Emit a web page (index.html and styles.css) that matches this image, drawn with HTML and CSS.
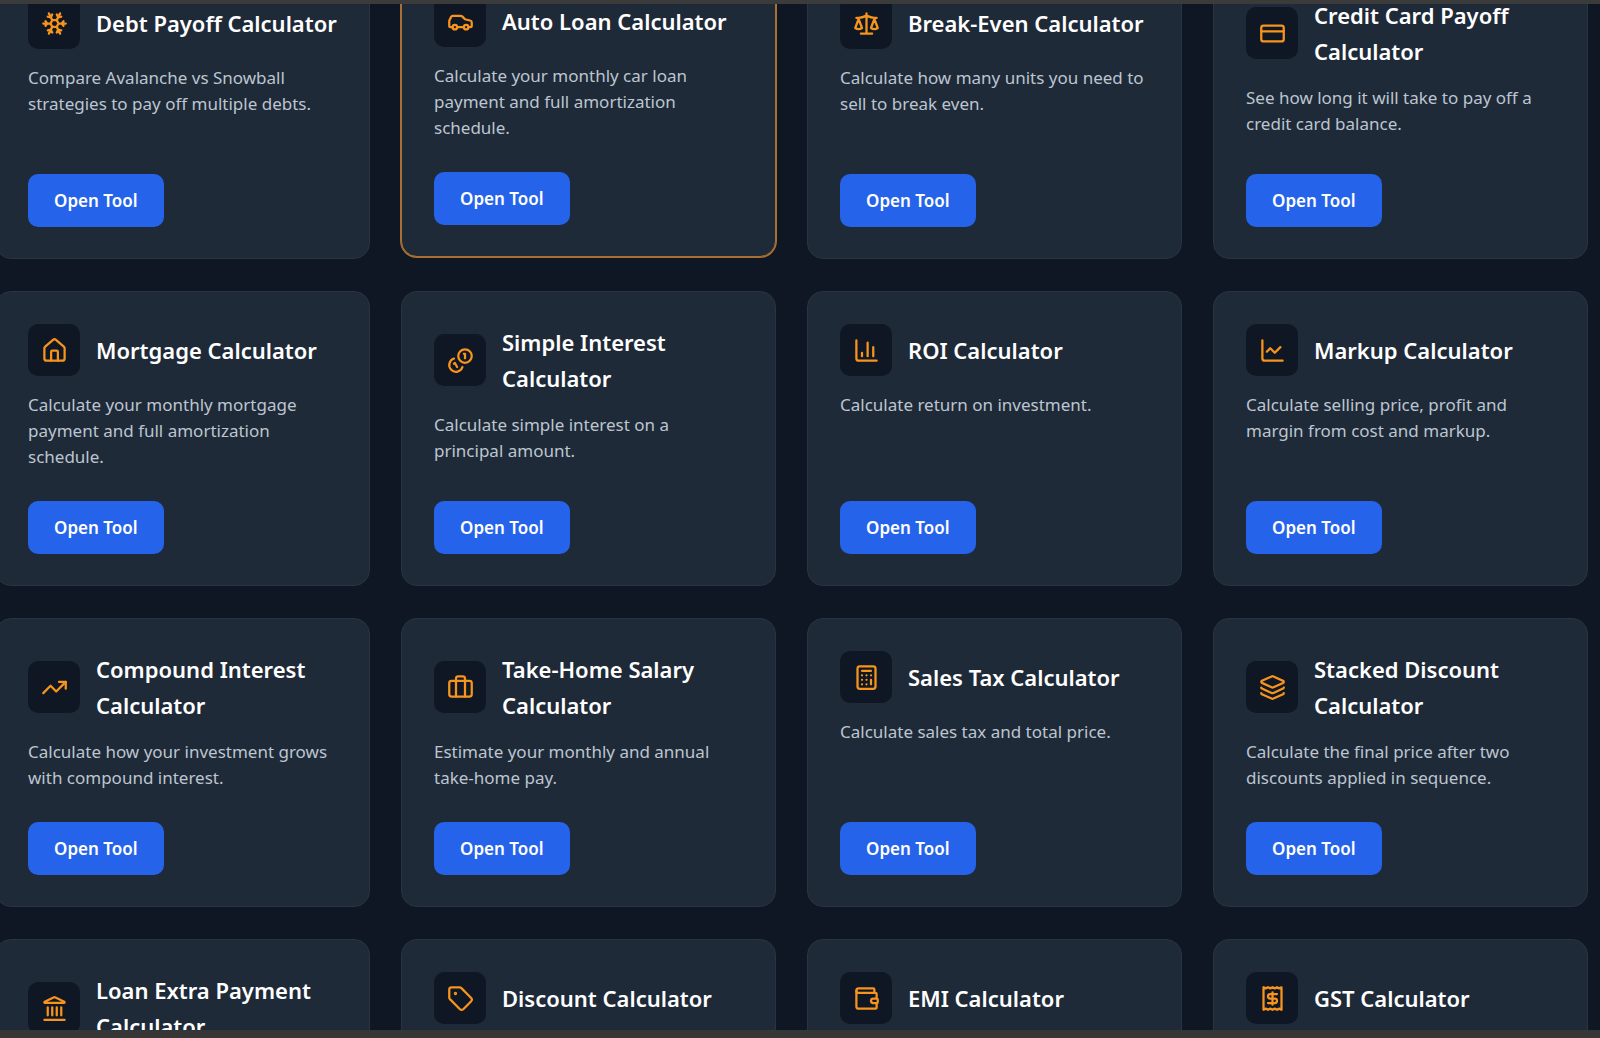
FILE: index.html
```html
<!DOCTYPE html>
<html lang="en">
<head>
    <meta charset="UTF-8">
    <meta name="viewport" content="width=device-width, initial-scale=1">
    <title>Finance Calculators</title>
    <link rel="stylesheet" href="styles.css">
</head>
<body>
    <main class="viewport">
        <div class="tools-grid">

            <article class="card">
                <div class="card-header">
                    <span class="card-icon"><svg viewBox="0 0 24 24"><path d="m10 20-1.25-2.5L6 18M10 4 8.75 6.5 6 6m8 14 1.25-2.5L18 18M14 4l1.25 2.5L18 6m-1 15-3-6h-4m7-12-3 6 1.5 3M2 12h6.5L10 9m10 1-1.5 2 1.5 2m2-2h-6.5L14 15M4 10l1.5 2L4 14m3 7 3-6-1.5-3M7 3l3 6h4"/></svg></span>
                    <h3>Debt Payoff Calculator</h3>
                </div>
                <p>Compare Avalanche vs Snowball strategies to pay off multiple debts.</p>
                <button type="button">Open Tool</button>
            </article>

            <article class="card active">
                <div class="card-header">
                    <span class="card-icon"><svg viewBox="0 0 24 24"><path d="M19 17h2c.6 0 1-.4 1-1v-3c0-.9-.7-1.7-1.5-1.9C18.7 10.6 16 10 16 10s-1.3-1.4-2.2-2.3c-.5-.4-1.1-.7-1.8-.7H5c-.6 0-1.1.4-1.4.9l-1.4 2.9A3.7 3.7 0 0 0 2 12v4c0 .6.4 1 1 1h2M9 17h6"/><circle cx="7" cy="17" r="2"/><circle cx="17" cy="17" r="2"/></svg></span>
                    <h3>Auto Loan Calculator</h3>
                </div>
                <p>Calculate your monthly car loan payment and full amortization schedule.</p>
                <button type="button">Open Tool</button>
            </article>

            <article class="card">
                <div class="card-header">
                    <span class="card-icon"><svg viewBox="0 0 24 24"><path d="m16 16 3-8 3 8c-.87.65-1.92 1-3 1s-2.13-.35-3-1ZM2 16l3-8 3 8c-.87.65-1.92 1-3 1s-2.13-.35-3-1ZM7 21h10M12 3v18M3 7h2c2 0 5-1 7-2 2 1 5 2 7 2h2"/></svg></span>
                    <h3>Break-Even Calculator</h3>
                </div>
                <p>Calculate how many units you need to sell to break even.</p>
                <button type="button">Open Tool</button>
            </article>

            <article class="card">
                <div class="card-header">
                    <span class="card-icon"><svg viewBox="0 0 24 24"><rect x="2" y="5" width="20" height="14" rx="2"/><path d="M2 10h20"/></svg></span>
                    <h3>Credit Card Payoff Calculator</h3>
                </div>
                <p>See how long it will take to pay off a credit card balance.</p>
                <button type="button">Open Tool</button>
            </article>

            <article class="card">
                <div class="card-header">
                    <span class="card-icon"><svg viewBox="0 0 24 24"><path d="M15 21v-8a1 1 0 0 0-1-1h-4a1 1 0 0 0-1 1v8"/><path d="M3 10a2 2 0 0 1 .709-1.528l7-5.999a2 2 0 0 1 2.582 0l7 5.999A2 2 0 0 1 21 10v9a2 2 0 0 1-2 2H5a2 2 0 0 1-2-2z"/></svg></span>
                    <h3>Mortgage Calculator</h3>
                </div>
                <p>Calculate your monthly mortgage payment and full amortization schedule.</p>
                <button type="button">Open Tool</button>
            </article>

            <article class="card">
                <div class="card-header">
                    <span class="card-icon"><svg viewBox="0 0 24 24"><path d="M13.744 17.736a6 6 0 1 1-7.48-7.48M15 6h1v4M6.134 14.768l.866-.5 2 3.464"/><circle cx="16" cy="8" r="6"/></svg></span>
                    <h3>Simple Interest Calculator</h3>
                </div>
                <p>Calculate simple interest on a<br>principal amount.</p>
                <button type="button">Open Tool</button>
            </article>

            <article class="card">
                <div class="card-header">
                    <span class="card-icon"><svg viewBox="0 0 24 24"><path d="M3 3v16a2 2 0 0 0 2 2h16M18 17V9M13 17V5M8 17v-3"/></svg></span>
                    <h3>ROI Calculator</h3>
                </div>
                <p>Calculate return on investment.</p>
                <button type="button">Open Tool</button>
            </article>

            <article class="card">
                <div class="card-header">
                    <span class="card-icon"><svg viewBox="0 0 24 24"><path d="M3 3v16a2 2 0 0 0 2 2h16M19 9l-5 5-4-4-3 3"/></svg></span>
                    <h3>Markup Calculator</h3>
                </div>
                <p>Calculate selling price, profit and margin from cost and markup.</p>
                <button type="button">Open Tool</button>
            </article>

            <article class="card">
                <div class="card-header">
                    <span class="card-icon"><svg viewBox="0 0 24 24"><path d="M16 7h6v6"/><path d="m22 7-8.5 8.5-5-5L2 17"/></svg></span>
                    <h3>Compound Interest Calculator</h3>
                </div>
                <p>Calculate how your investment grows with compound interest.</p>
                <button type="button">Open Tool</button>
            </article>

            <article class="card">
                <div class="card-header">
                    <span class="card-icon"><svg viewBox="0 0 24 24"><path d="M16 20V4a2 2 0 0 0-2-2h-4a2 2 0 0 0-2 2v16"/><rect x="2" y="6" width="20" height="14" rx="2"/></svg></span>
                    <h3>Take-Home Salary Calculator</h3>
                </div>
                <p>Estimate your monthly and annual take-home pay.</p>
                <button type="button">Open Tool</button>
            </article>

            <article class="card">
                <div class="card-header">
                    <span class="card-icon"><svg viewBox="0 0 24 24"><rect x="4" y="2" width="16" height="20" rx="2"/><path d="M8 6h8M16 14v4M16 10h.01M12 10h.01M8 10h.01M12 14h.01M8 14h.01M12 18h.01M8 18h.01"/></svg></span>
                    <h3>Sales Tax Calculator</h3>
                </div>
                <p>Calculate sales tax and total price.</p>
                <button type="button">Open Tool</button>
            </article>

            <article class="card">
                <div class="card-header">
                    <span class="card-icon"><svg viewBox="0 0 24 24"><path d="M12.83 2.18a2 2 0 0 0-1.66 0L2.6 6.08a1 1 0 0 0 0 1.83l8.58 3.91a2 2 0 0 0 1.66 0l8.58-3.9a1 1 0 0 0 0-1.83z"/><path d="M2 12a1 1 0 0 0 .58.91l8.6 3.91a2 2 0 0 0 1.65 0l8.58-3.9A1 1 0 0 0 22 12"/><path d="M2 17a1 1 0 0 0 .58.91l8.6 3.91a2 2 0 0 0 1.65 0l8.58-3.9A1 1 0 0 0 22 17"/></svg></span>
                    <h3>Stacked Discount Calculator</h3>
                </div>
                <p>Calculate the final price after two discounts applied in sequence.</p>
                <button type="button">Open Tool</button>
            </article>

            <article class="card">
                <div class="card-header">
                    <span class="card-icon"><svg viewBox="0 0 24 24"><path d="M11.119 2.205a2 2 0 0 1 1.762 0l7.84 3.846A.5.5 0 0 1 20.5 7h-17a.5.5 0 0 1-.22-.949z"/><path d="M6 18v-7M10 18v-7M14 18v-7M18 18v-7M3 22h18"/></svg></span>
                    <h3>Loan Extra Payment Calculator</h3>
                </div>
            </article>

            <article class="card">
                <div class="card-header">
                    <span class="card-icon"><svg viewBox="0 0 24 24"><path d="M12.586 2.586A2 2 0 0 0 11.172 2H4a2 2 0 0 0-2 2v7.172a2 2 0 0 0 .586 1.414l8.704 8.704a2.426 2.426 0 0 0 3.42 0l6.58-6.58a2.426 2.426 0 0 0 0-3.42z"/><circle class="dot" cx="7.5" cy="7.5" r=".5"/></svg></span>
                    <h3>Discount Calculator</h3>
                </div>
            </article>

            <article class="card">
                <div class="card-header">
                    <span class="card-icon"><svg viewBox="0 0 24 24"><path d="M19 7V4a1 1 0 0 0-1-1H5a2 2 0 0 0 0 4h15a1 1 0 0 1 1 1v4h-3a2 2 0 0 0 0 4h3a1 1 0 0 0 1-1v-2a1 1 0 0 0-1-1"/><path d="M3 5v14a2 2 0 0 0 2 2h15a1 1 0 0 0 1-1v-4"/></svg></span>
                    <h3>EMI Calculator</h3>
                </div>
            </article>

            <article class="card">
                <div class="card-header">
                    <span class="card-icon"><svg viewBox="0 0 24 24"><path d="M4 2v20l2-1 2 1 2-1 2 1 2-1 2 1 2-1 2 1V2l-2 1-2-1-2 1-2-1-2 1-2-1-2 1Z"/><path d="M16 8h-6a2 2 0 1 0 0 4h4a2 2 0 1 1 0 4H8M12 17.5v-11"/></svg></span>
                    <h3>GST Calculator</h3>
                </div>
            </article>

        </div>
    </main>
</body>
</html>
```
FILE: styles.css
```css
* {
    box-sizing: border-box;
}
body {
    margin: 0;
    height: 100vh;
    background-color: #0f1724;
    color: #ffffff;
    font-family: "Segoe UI", "Noto Sans", "Open Sans", sans-serif;
}
.viewport {
    height: 100%;
    overflow: hidden;
    border-top: 4px solid #3b3b3c;
    border-bottom: 8px solid #363636;
}
/* grid is scrolled part of the way into its first row */
.tools-grid {
    display: grid;
    grid-template-columns: repeat(4, 1fr);
    gap: 32px 31px;
    margin: -40px 12px 0 -5px;
}
.card {
    display: flex;
    flex-direction: column;
    align-items: flex-start;
    padding: 32px 28px 31px 32px;
    background-color: #1f2a38;
    border: 1px solid #283443;
    border-radius: 16px;
}
.card.active {
    border-color: #a87031;
    box-shadow: 0 0 0 1px #a87031;
    transform: translateY(-2px);
}
.card-header {
    display: flex;
    align-items: center;
    gap: 16px;
    margin-bottom: 16px;
}
.card-icon {
    display: flex;
    align-items: center;
    justify-content: center;
    flex-shrink: 0;
    width: 52px;
    height: 52px;
    background-color: #0f1724;
    border-radius: 10px;
}
.card-icon svg {
    width: 27px;
    height: 27px;
    fill: none;
    stroke: #f7941d;
    stroke-width: 2;
    stroke-linecap: round;
    stroke-linejoin: round;
}
.card-icon .dot {
    fill: #f7941d;
}
h3 {
    margin: 0;
    font-size: 22px;
    font-weight: 600;
    line-height: 36px;
}
p {
    margin: 0 0 31px;
    color: #bcc5d0;
    font-size: 17px;
    line-height: 26px;
}
button {
    height: 53px;
    margin-top: auto;
    padding: 0 26px;
    background-color: #2563eb;
    border: none;
    border-radius: 10px;
    color: #ffffff;
    font-family: inherit;
    font-size: 17px;
    font-weight: 600;
    cursor: pointer;
}
button:hover {
    background-color: #1d4ed8;
}
```
